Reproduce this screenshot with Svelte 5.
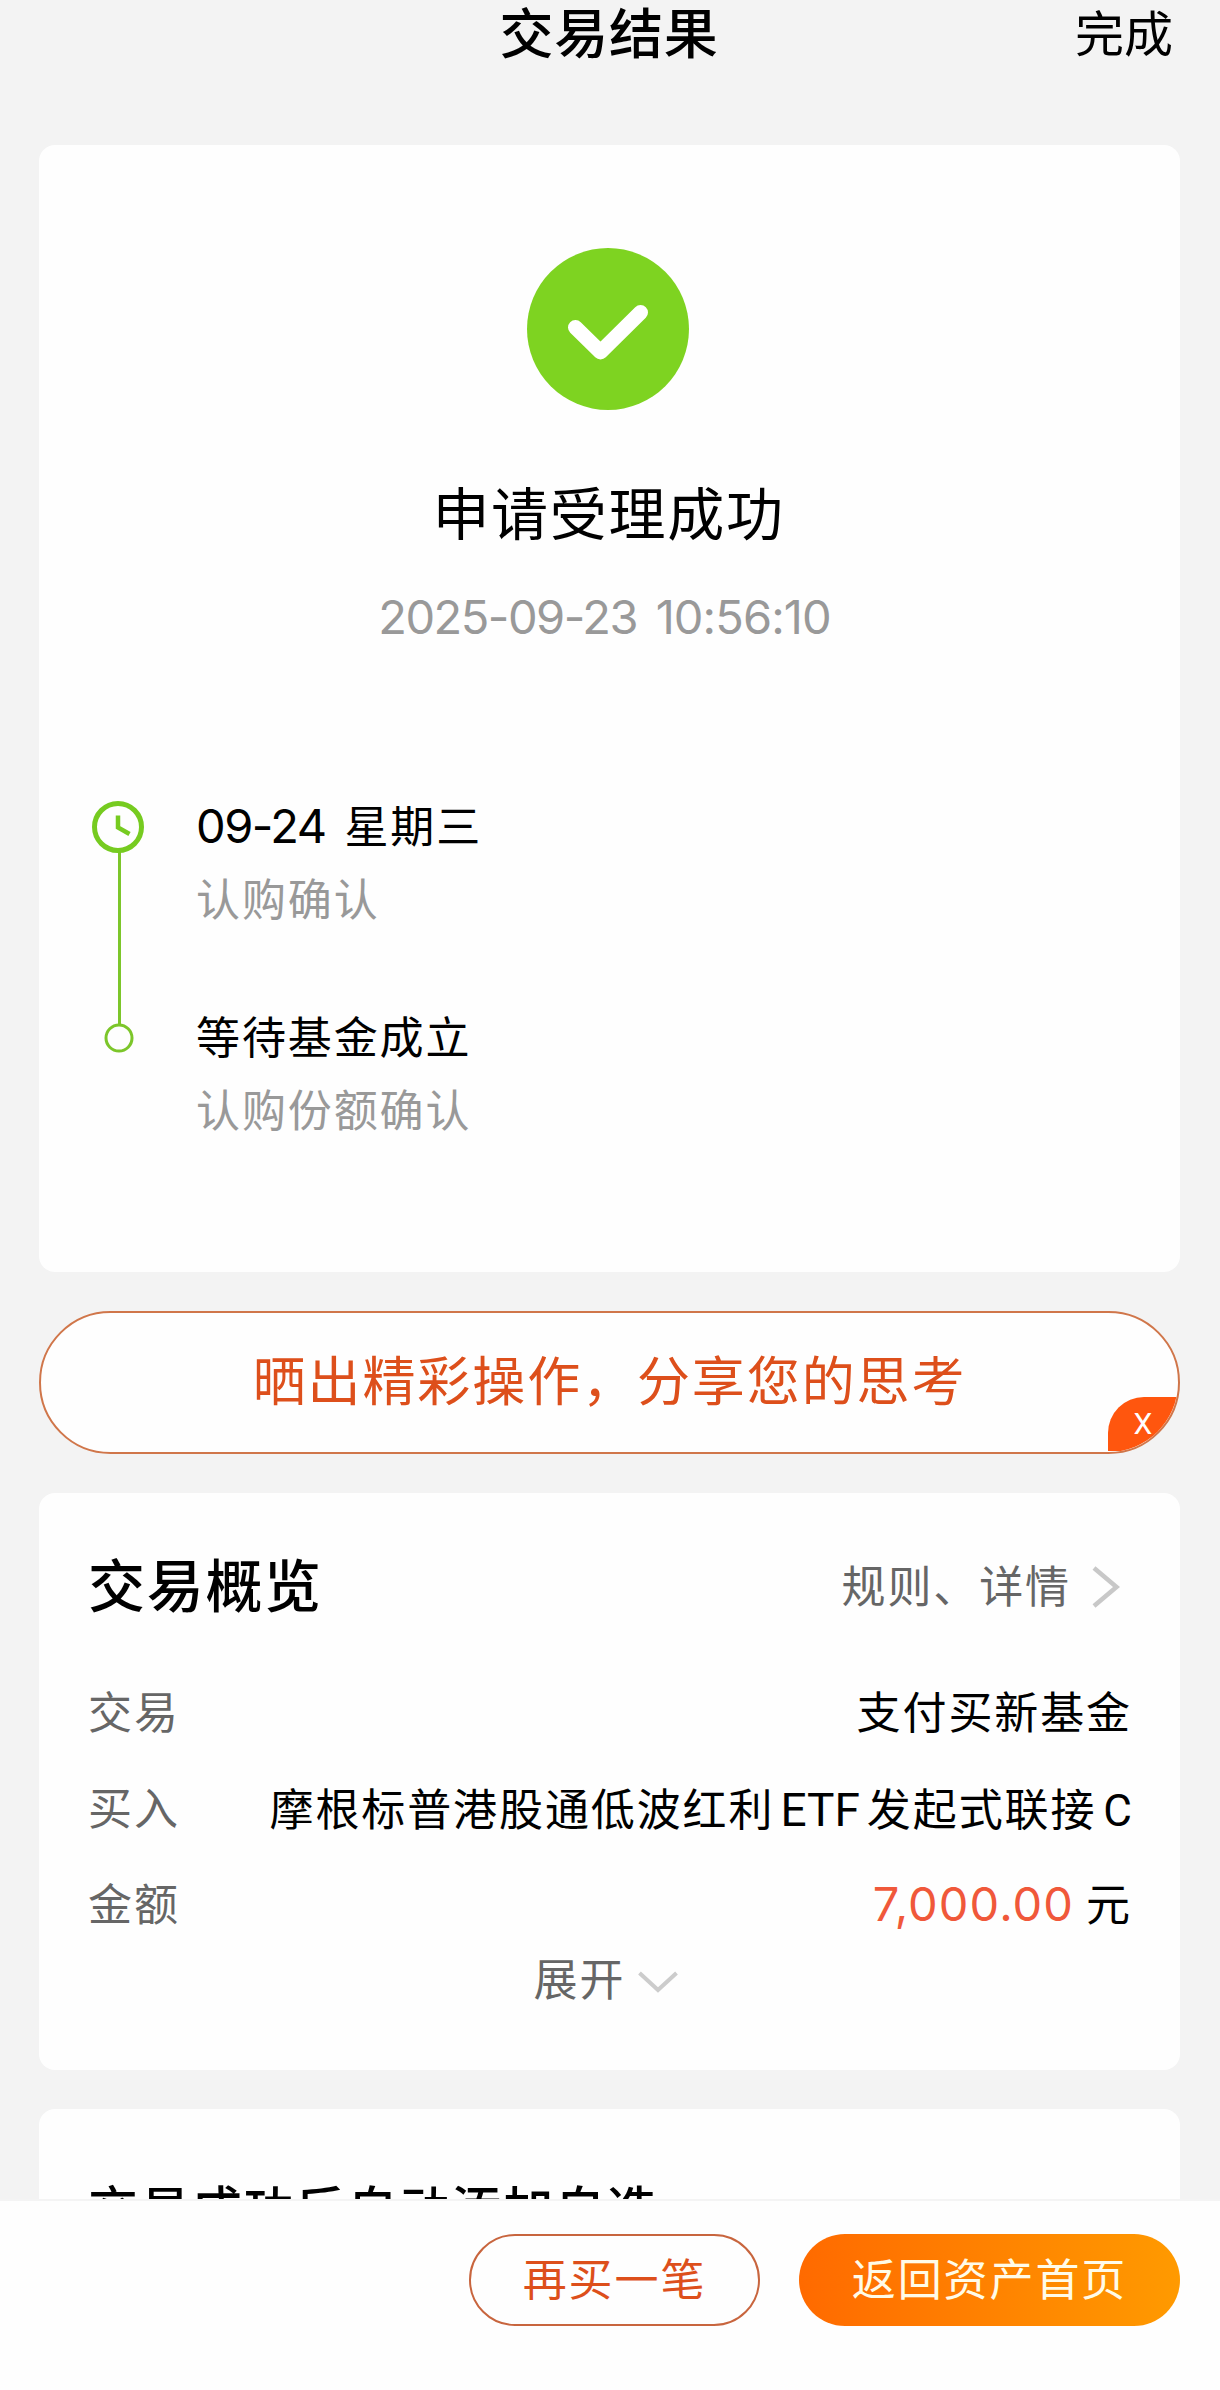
<script lang="ts">
	type Step = { date?: string; title: string; note: string };

	const steps: Step[] = [
		{ date: '09-24', title: '星期三', note: '认购确认' },
		{ title: '等待基金成立', note: '认购份额确认' }
	];

	let showShare = $state(true);
</script>

<div class="page">
	<header class="header">
		<h1>交易结果</h1>
		<button class="done" type="button">完成</button>
	</header>

	<main class="content">
		<section class="card result">
			<svg class="check" viewBox="0 0 162 162" aria-hidden="true">
				<circle cx="81" cy="81" r="81" fill="#7ed321" />
				<path
					d="M48.5 79.5 L73.5 104 L113.5 64.5"
					fill="none"
					stroke="#fff"
					stroke-width="15"
					stroke-linecap="round"
					stroke-linejoin="round"
				/>
			</svg>
			<h2>申请受理成功</h2>
			<time class="date num">2025-09-23 <span class="clock">10:56:10</span></time>

			<div class="timeline">
				<svg class="rail" viewBox="0 0 54 252" fill="none" stroke="#7cc62a" aria-hidden="true">
					<path d="M27.5 51 V223" stroke-width="3" />
					<circle cx="26" cy="26" r="23.5" stroke="#76cb20" stroke-width="5" />
					<path d="M26 14.5 V26.5 L37.5 33" stroke="#76cb20" stroke-width="4.5" />
					<circle cx="27" cy="237" r="13" stroke-width="3" />
				</svg>
				<ol class="steps">
					{#each steps as step}
						<li>
							<p class="step-title">
								{#if step.date}<span class="num">{step.date}</span>{' '}{/if}{step.title}
							</p>
							<p class="step-note">{step.note}</p>
						</li>
					{/each}
				</ol>
			</div>
		</section>

		{#if showShare}
			<div class="share">
				<span>晒出精彩操作，分享您的思考</span>
				<button class="close" type="button" onclick={() => (showShare = false)}>X</button>
			</div>
		{/if}

		<section class="card overview">
			<div class="overview-head">
				<h3>交易概览</h3>
				<a class="rules" href="#rules">
					规则、详情
					<svg viewBox="0 0 28 42" fill="none" stroke="#c8c8c8" stroke-width="4.5">
						<path d="M2 2 L24.5 21 L2 40" />
					</svg>
				</a>
			</div>
			<dl>
				<div class="row">
					<dt>交易</dt>
					<dd>支付买新基金</dd>
				</div>
				<div class="row">
					<dt>买入</dt>
					<dd>摩根标普港股通低波红利<span class="latin">ETF</span>发起式联接<span class="share-class">C</span></dd>
				</div>
				<div class="row">
					<dt>金额</dt>
					<dd><span class="amount num">7,000.00</span>元</dd>
				</div>
			</dl>
			<button class="expand" type="button">
				展开
				<svg viewBox="0 0 40 22" fill="none" stroke="#ccc" stroke-width="4">
					<path d="M1.5 2 L20 19 L38.5 2" />
				</svg>
			</button>
		</section>

		<section class="card watchlist">
			<h3>交易成功后自动添加自选</h3>
		</section>
	</main>

	<footer class="actions">
		<button class="again" type="button">再买一笔</button>
		<button class="home" type="button">返回资产首页</button>
	</footer>
</div>

<style>
	:global(body) {
		background: #f3f3f3;
	}
	.page {
		display: flex;
		flex-direction: column;
		height: 2390px;
		overflow: hidden;
		background: #f3f3f3;
		color: #000;
		font-family: Roboto, 'Noto Sans CJK SC', sans-serif;
		font-size: 44px;
		line-height: 54px;
		letter-spacing: 1.9px;
	}
	h1,
	h2,
	h3,
	p,
	ol,
	dl,
	dd {
		margin: 0;
		padding: 0;
	}
	button {
		font: inherit;
		letter-spacing: inherit;
		color: inherit;
		border: none;
		background: none;
		padding: 0;
	}
	.num {
		font-family: Inter, 'Noto Sans CJK SC', sans-serif;
		font-size: 47px;
		line-height: 50px;
		letter-spacing: -1.5px;
	}
	.header {
		display: grid;
		grid-template-columns: 1fr auto 1fr;
		align-items: center;
		flex: none;
		height: 71px;
		margin-bottom: 74px;
		padding: 0 47px 0 45px;
	}
	h1 {
		grid-column: 2;
		font-size: 54px;
		font-weight: 500;
		line-height: 60px;
		letter-spacing: 0.7px;
	}
	.done {
		justify-self: end;
		font-size: 49px;
		line-height: 60px;
		letter-spacing: 0;
	}
	.content {
		display: flex;
		flex-direction: column;
		flex: 1;
		min-height: 0;
		overflow: hidden;
		padding: 0 40px 0 39px;
	}
	.card {
		flex: none;
		border-radius: 16px;
		background: #fefefe;
	}
	.result {
		display: flex;
		flex-direction: column;
		align-items: center;
		box-sizing: border-box;
		height: 1127px;
		padding-top: 103px;
	}
	.check {
		width: 162px;
		height: 162px;
		margin-right: 3px;
	}
	h2 {
		margin: 76px 2px 0 0;
		font-size: 57px;
		font-weight: 400;
		line-height: 60px;
		letter-spacing: 1.7px;
	}
	.date {
		margin: 46px 10px 1px 0;
		color: #999;
		word-spacing: 7px;
	}
	.clock {
		letter-spacing: -0.9px;
	}
	.timeline {
		display: flex;
		align-self: stretch;
		gap: 50px;
		margin-top: 158px;
		padding-left: 53px;
	}
	.rail {
		width: 54px;
		height: 252px;
	}
	.steps {
		display: flex;
		flex-direction: column;
		gap: 84px;
		list-style: none;
	}
	.step-title .num {
		margin-right: 6px;
	}
	.step-note {
		margin-top: 19px;
		color: #999;
	}
	.share {
		position: relative;
		display: flex;
		align-items: center;
		justify-content: center;
		flex: none;
		box-sizing: border-box;
		height: 143px;
		margin: 39px 0;
		border: 2px solid #d0764a;
		border-radius: 72px;
		background: #fefefe;
		overflow: hidden;
		color: #dd4f1b;
		font-size: 53px;
		letter-spacing: 1.9px;
	}
	.close {
		position: absolute;
		right: 0;
		bottom: 1px;
		width: 70px;
		height: 54px;
		border-radius: 40px 0 60px 0;
		background: #ff560e;
		color: #fff;
		font-size: 30px;
		letter-spacing: 0;
	}
	.overview {
		box-sizing: border-box;
		height: 577px;
		padding: 65px 48px 0 49px;
	}
	.overview-head {
		display: flex;
		align-items: center;
		justify-content: space-between;
		height: 60px;
	}
	h3 {
		font-size: 57px;
		font-weight: 500;
		line-height: 60px;
		letter-spacing: 1.7px;
	}
	.rules {
		display: flex;
		align-items: center;
		gap: 21px;
		margin-right: 12px;
		color: #666;
		text-decoration: none;
	}
	.rules svg {
		width: 28px;
		height: 42px;
		margin-bottom: 2px;
	}
	dl {
		margin-top: 48px;
	}
	.row {
		display: flex;
		align-items: center;
		justify-content: space-between;
		height: 96px;
	}
	dt {
		color: #666;
	}
	.latin {
		margin: 0 7px 0 6px;
		font-size: 46px;
		letter-spacing: 0;
	}
	.share-class {
		margin-left: 7px;
		letter-spacing: 0;
	}
	.amount {
		margin-right: 12px;
		color: #f0583a;
		letter-spacing: 1.1px;
	}
	.expand {
		display: flex;
		align-items: center;
		gap: 13px;
		height: 54px;
		margin: 0 auto;
		padding-right: 8px;
		color: #666;
	}
	.expand svg {
		width: 40px;
		height: 22px;
		margin-top: 1px;
	}
	.watchlist {
		height: 300px;
		margin-top: 39px;
		padding: 72px 49px 0;
	}
	.watchlist h3 {
		font-size: 50px;
		letter-spacing: 1.9px;
	}
	.actions {
		display: flex;
		align-items: flex-start;
		justify-content: flex-end;
		gap: 39px;
		flex: none;
		box-sizing: border-box;
		height: 191px;
		padding: 33px 40px 0;
		border-top: 2px solid #f4f4f4;
		background: #fefefe;
	}
	.actions button {
		box-sizing: border-box;
		height: 92px;
		padding-top: 2px;
		border-radius: 46px;
	}
	.again {
		width: 291px;
		border: 2px solid #c8653e;
		color: #dd4f1b;
	}
	.home {
		width: 381px;
		background: linear-gradient(90deg, #ff6a00, #ff9a00);
		color: #fffbe8;
	}
</style>
